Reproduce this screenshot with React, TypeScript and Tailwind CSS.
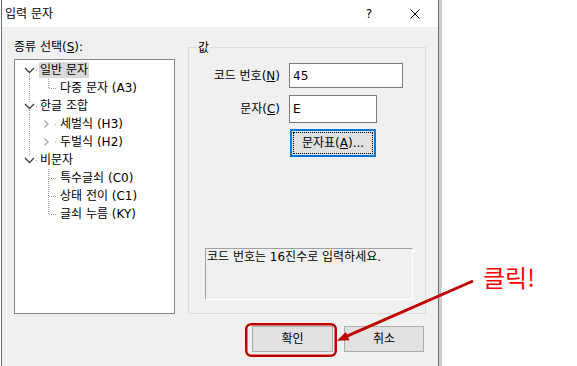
import React from "react";

const DOT = "#a0a0a0";

// dotted tree connectors, drawn per row (row is 18px tall)
function VLine({ x, y1, y2 }: { x: number; y1: number; y2: number }) {
  return <line x1={x} x2={x} y1={y1} y2={y2} stroke={DOT} strokeDasharray="1 1" shapeRendering="crispEdges" />;
}

function HLine({ x1, x2 }: { x1: number; x2: number }) {
  return <line x1={x1} x2={x2} y1={9.5} y2={9.5} stroke={DOT} strokeDasharray="1 1" shapeRendering="crispEdges" />;
}

const Down = () => <polyline points="10,7 14.5,11.5 19,7" fill="none" stroke="#3c3c3c" strokeWidth="1.3" />;
const Right = () => <polyline points="29.5,5.5 33,9 29.5,12.5" fill="none" stroke="#a6a6a6" strokeWidth="1.3" />;
const Dot = ({ x }: { x: number }) => <rect x={x} y={9} width={1} height={1} fill={DOT} />;

type TreeRow = {
  label: string;
  level: 0 | 1;
  selected?: boolean;
  lines: React.ReactNode;
};

const rows: TreeRow[] = [
  {
    label: "일반 문자",
    level: 0,
    selected: true,
    lines: (
      <>
        <Down />
        <Dot x={21} />
        <VLine x={14.5} y1={13} y2={18} />
      </>
    ),
  },
  {
    label: "다중 문자 (A3)",
    level: 1,
    lines: (
      <>
        <VLine x={14.5} y1={0} y2={18} />
        <VLine x={33.5} y1={0} y2={10} />
        <HLine x1={34} x2={42} />
      </>
    ),
  },
  {
    label: "한글 조합",
    level: 0,
    lines: (
      <>
        <VLine x={14.5} y1={0} y2={5} />
        <Down />
        <Dot x={21} />
        <VLine x={14.5} y1={13} y2={18} />
      </>
    ),
  },
  {
    label: "세벌식 (H3)",
    level: 1,
    lines: (
      <>
        <VLine x={14.5} y1={0} y2={18} />
        <Right />
        <Dot x={40} />
      </>
    ),
  },
  {
    label: "두벌식 (H2)",
    level: 1,
    lines: (
      <>
        <VLine x={14.5} y1={0} y2={18} />
        <Right />
        <Dot x={40} />
      </>
    ),
  },
  {
    label: "비문자",
    level: 0,
    lines: (
      <>
        <VLine x={14.5} y1={0} y2={5} />
        <Down />
        <Dot x={21} />
      </>
    ),
  },
  {
    label: "특수글쇠 (C0)",
    level: 1,
    lines: (
      <>
        <VLine x={33.5} y1={0} y2={18} />
        <HLine x1={34} x2={42} />
      </>
    ),
  },
  {
    label: "상태 전이 (C1)",
    level: 1,
    lines: (
      <>
        <VLine x={33.5} y1={0} y2={18} />
        <HLine x1={34} x2={42} />
      </>
    ),
  },
  {
    label: "글쇠 누름 (KY)",
    level: 1,
    lines: (
      <>
        <VLine x={33.5} y1={0} y2={10} />
        <HLine x1={34} x2={42} />
      </>
    ),
  },
];

export default function App() {
  return (
    <div className="relative flex h-[366px] w-[577px] overflow-hidden bg-white font-['DejaVu_Sans','Noto_Sans_CJK_KR',sans-serif] text-[12px] text-black">
      {/* DIALOG */}
      <div className="ml-px flex h-full w-[438px] flex-col border-x border-[#6e6e6e] bg-[#f0f0f0]">
        {/* title bar */}
        <div className="flex h-[27px] items-center bg-white pl-[3px]">
          <span className="leading-[14px]">입력 문자</span>
          <span className="ml-auto leading-[14px]">?</span>
          <svg width="10" height="10" viewBox="0 0 10 10" className="ml-[38px] mr-[18px]">
            <path d="M0.5 0.5 L9.5 9.5 M9.5 0.5 L0.5 9.5" stroke="#000" strokeWidth="1" />
          </svg>
        </div>

        <div className="flex flex-1 flex-col pt-[13px]">
          <div className="flex">
            {/* left: tree */}
            <div className="ml-[12px] flex w-[161px] flex-col">
              <div className="h-[19px] leading-[14px]">
                종류 선택(<u className="underline-offset-1">S</u>):
              </div>
              <div className="h-[255px] border border-[#828790] bg-white pt-px">
                {rows.map((r, i) => (
                  <div key={i} className="flex h-[18px] items-center">
                    <svg width={r.level === 0 ? 24 : 44} height="18" className="shrink-0">
                      {r.lines}
                    </svg>
                    <span
                      className={
                        "h-[16px] px-px leading-[16px] " + (r.selected ? "bg-[#d9d9d9]" : "")
                      }
                    >
                      {r.label}
                    </span>
                  </div>
                ))}
              </div>
            </div>

            {/* right: value group */}
            <div className="relative ml-[13px] mt-[7px] flex h-[267px] w-[238px] flex-col border border-[#dcdcdc]">
              <span className="absolute left-[8px] top-[-7px] bg-[#f0f0f0] px-px leading-[14px]">값</span>

              <div className="mt-[15px] flex items-center">
                <div className="w-[91px] text-right leading-[14px]">
                  코드 번호(<u className="underline-offset-1">N</u>)
                </div>
                <div className="ml-[9px] flex h-[25px] w-[114px] items-center border border-[#7a7a7a] bg-white pl-[3px] leading-[14px]">
                  45
                </div>
              </div>

              <div className="mt-[7px] flex items-center">
                <div className="w-[91px] text-right leading-[14px]">
                  문자(<u className="underline-offset-1">C</u>)
                </div>
                <div className="ml-[9px] flex h-[28px] w-[88px] items-center border border-[#7a7a7a] bg-white pl-[3px] leading-[14px]">
                  E
                </div>
              </div>

              <div className="ml-[101px] mt-[6px] flex h-[28px] w-[86px] border-2 border-[#0078d7] bg-[#e1e1e1]">
                <span className="m-px flex flex-1 items-center justify-center border border-dotted border-black leading-[14px]">
                  문자표(<u className="underline-offset-1">A</u>)...
                </span>
              </div>

              <div className="mb-[13px] ml-[16px] mt-auto h-[52px] w-[208px] border border-[#a0a0a0] border-b-white border-r-white pl-px pt-px leading-[15px]">
                코드 번호는 16진수로 입력하세요.
              </div>
            </div>
          </div>

          {/* OK / CANCEL */}
          <div className="mt-[12px] flex justify-end gap-[11px] pr-[14px]">
            <div className="flex h-[26px] w-[81px] items-center justify-center border border-[#adadad] bg-[#e1e1e1] leading-[14px]">
              확인
            </div>
            <div className="flex h-[26px] w-[80px] items-center justify-center border border-[#adadad] bg-[#e1e1e1] leading-[14px]">
              취소
            </div>
          </div>
        </div>
      </div>

      {/* window edge behind */}
      <div className="h-full w-[3px] bg-[#cdcdcd]" />

      {/* ANNOTATION: red box, arrow, label */}
      <svg width="577" height="366" className="pointer-events-none absolute left-0 top-0">
        <rect x="246.25" y="324.25" width="89.5" height="31.5" rx="5" fill="none" stroke="#c00000" strokeWidth="2.5" />
        <line x1="473" y1="281" x2="347" y2="336.2" stroke="#c00000" strokeWidth="3" />
        <polygon points="337,340.7 349.4,340.2 345.8,332" fill="#c00000" />
      </svg>
      <span className="absolute left-[483px] top-[265px] font-['Noto_Sans_CJK_KR',sans-serif] text-[24px] leading-none text-[#ff0000]">
        클릭!
      </span>
    </div>
  );
}
